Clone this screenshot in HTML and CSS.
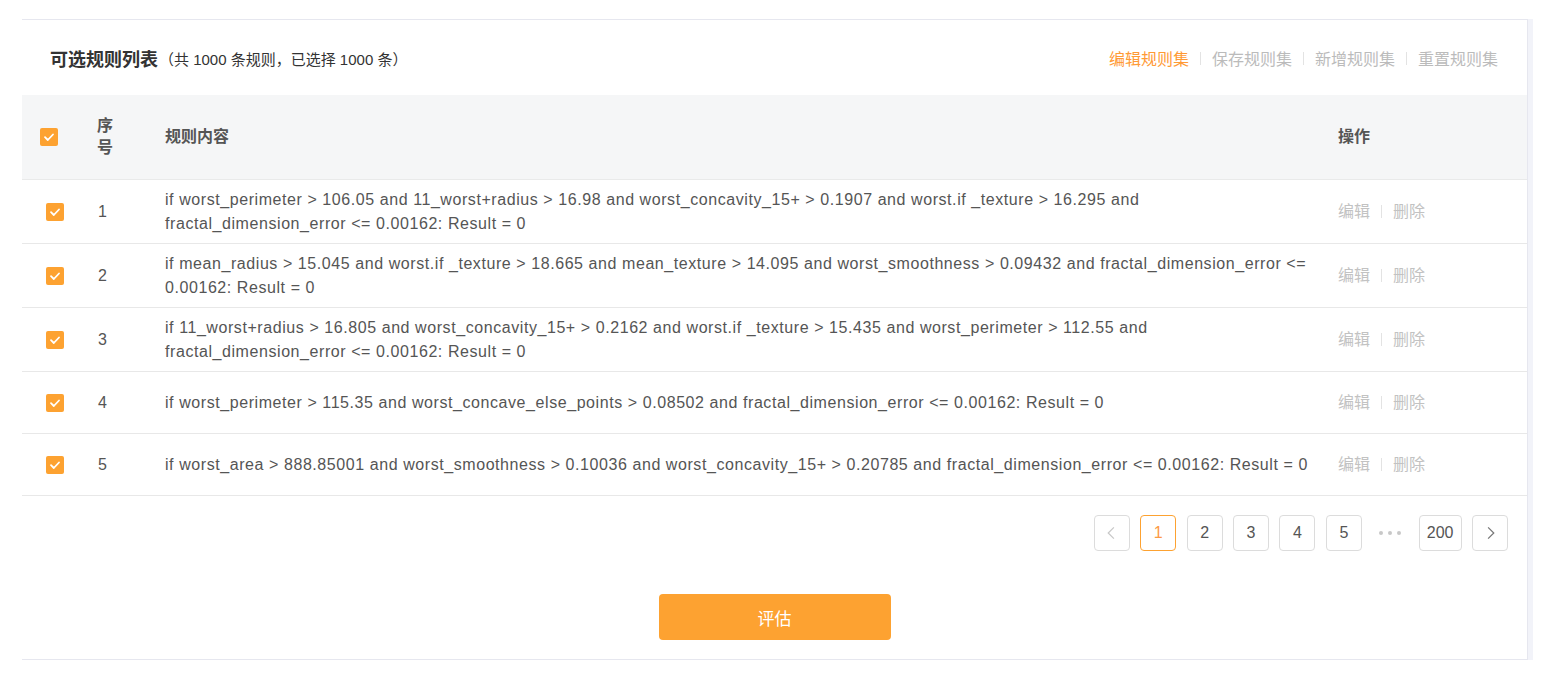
FILE: index.html
```html
<!DOCTYPE html>
<html lang="zh">
<head>
<meta charset="utf-8">
<title>可选规则列表</title>
<link rel="stylesheet" href="styles.css">
</head>
<body>
<div class="card">
  <div class="title-bar">
    <div class="title"><span class="title-main">可选规则列表</span><span class="title-sub">（共 1000 条规则，已选择 1000 条）</span></div>
    <div class="actions">
      <span class="act active">编辑规则集</span><span class="sep"></span>
      <span class="act">保存规则集</span><span class="sep"></span>
      <span class="act">新增规则集</span><span class="sep"></span>
      <span class="act">重置规则集</span>
    </div>
  </div>

  <div class="table">
    <div class="row head">
      <div class="c-check"><span class="cb"><svg viewBox="0 0 18 18"><polyline points="5,9.2 7.8,12 13,6.5"/></svg></span></div>
      <div class="c-num"><span class="num-label">序号</span></div>
      <div class="c-content">规则内容</div>
      <div class="c-op">操作</div>
    </div>
    <div class="row">
      <div class="c-check"><span class="cb"><svg viewBox="0 0 18 18"><polyline points="5,9.2 7.8,12 13,6.5"/></svg></span></div>
      <div class="c-num">1</div>
      <div class="c-content">if worst_perimeter &gt; 106.05 and 11_worst+radius &gt; 16.98 and worst_concavity_15+ &gt; 0.1907 and worst.if _texture &gt; 16.295 and fractal_dimension_error &lt;= 0.00162: Result = 0</div>
      <div class="c-op"><span>编辑</span><span class="sep small"></span><span>删除</span></div>
    </div>
    <div class="row">
      <div class="c-check"><span class="cb"><svg viewBox="0 0 18 18"><polyline points="5,9.2 7.8,12 13,6.5"/></svg></span></div>
      <div class="c-num">2</div>
      <div class="c-content">if mean_radius &gt; 15.045 and worst.if _texture &gt; 18.665 and mean_texture &gt; 14.095 and worst_smoothness &gt; 0.09432 and fractal_dimension_error &lt;= 0.00162: Result = 0</div>
      <div class="c-op"><span>编辑</span><span class="sep small"></span><span>删除</span></div>
    </div>
    <div class="row">
      <div class="c-check"><span class="cb"><svg viewBox="0 0 18 18"><polyline points="5,9.2 7.8,12 13,6.5"/></svg></span></div>
      <div class="c-num">3</div>
      <div class="c-content">if 11_worst+radius &gt; 16.805 and worst_concavity_15+ &gt; 0.2162 and worst.if _texture &gt; 15.435 and worst_perimeter &gt; 112.55 and fractal_dimension_error &lt;= 0.00162: Result = 0</div>
      <div class="c-op"><span>编辑</span><span class="sep small"></span><span>删除</span></div>
    </div>
    <div class="row short">
      <div class="c-check"><span class="cb"><svg viewBox="0 0 18 18"><polyline points="5,9.2 7.8,12 13,6.5"/></svg></span></div>
      <div class="c-num">4</div>
      <div class="c-content">if worst_perimeter &gt; 115.35 and worst_concave_else_points &gt; 0.08502 and fractal_dimension_error &lt;= 0.00162: Result = 0</div>
      <div class="c-op"><span>编辑</span><span class="sep small"></span><span>删除</span></div>
    </div>
    <div class="row short">
      <div class="c-check"><span class="cb"><svg viewBox="0 0 18 18"><polyline points="5,9.2 7.8,12 13,6.5"/></svg></span></div>
      <div class="c-num">5</div>
      <div class="c-content">if worst_area &gt; 888.85001 and worst_smoothness &gt; 0.10036 and worst_concavity_15+ &gt; 0.20785 and fractal_dimension_error &lt;= 0.00162: Result = 0</div>
      <div class="c-op"><span>编辑</span><span class="sep small"></span><span>删除</span></div>
    </div>
  </div>

  <div class="pager">
    <span class="pg arrow disabled"><svg viewBox="0 0 36 36"><polyline points="20,12 14,18 20,24"/></svg></span>
    <span class="pg current">1</span>
    <span class="pg">2</span>
    <span class="pg">3</span>
    <span class="pg">4</span>
    <span class="pg">5</span>
    <span class="dots"><i></i><i></i><i></i></span>
    <span class="pg wide">200</span>
    <span class="pg arrow"><svg viewBox="0 0 36 36"><polyline points="16,12 22,18 16,24"/></svg></span>
  </div>

  <div class="btn-row">
    <button class="btn">评估</button>
  </div>
</div>
</body>
</html>
```

FILE: styles.css
```css
* { box-sizing: border-box; }
html, body { margin: 0; padding: 0; background: #fff; }
body {
  font-family: "Liberation Sans", "Noto Sans CJK SC", sans-serif;
  color: #555;
}
.card {
  margin: 19px 0 0 22px;
  width: 1506px;
  height: 641px;
  background: #fff;
  border-top: 1px solid #e6e7ef;
  border-right: 1px solid #e6e7ef;
  border-bottom: 1px solid #e6e7ef;
  box-shadow: 5px 0 0 #f2f3f9, 0 6px 0 #f2f3f9, 5px 6px 0 #f2f3f9;
  display: flex;
  flex-direction: column;
}
.title-bar {
  height: 75px;
  display: flex;
  align-items: center;
  justify-content: space-between;
  padding: 1px 29px 0 28px;
}
.title { display: flex; align-items: center; }
.title-main { font-size: 18px; font-weight: bold; color: #333; }
.title-sub { font-size: 15px; color: #333; margin-left: 1px; }
.actions { display: flex; align-items: center; font-size: 16px; color: #bbb; }
.act.active { color: #ff9a35; }
.sep { display: inline-block; width: 1px; height: 13px; background: #e3e3e3; margin: 0 11px; }
.sep.small { height: 13px; margin: 0 11px; }

.table { display: flex; flex-direction: column; }
.row {
  display: grid;
  grid-template-columns: 59px 68px 1173px 206px;
  align-items: center;
  min-height: 64px;
  border-bottom: 1px solid #e8e8e8;
  font-size: 16px;
  line-height: 24px;
}
.row.short { min-height: 62px; }
.row.head {
  background: #f5f6f7;
  height: 85px;
  font-weight: bold;
  color: #555;
  font-size: 16px;
  border-bottom: 1px solid #e9eaea;
}
.c-check { padding-left: 24px; display: flex; align-items: center; }
.head .c-check { padding-left: 18px; }
.c-num { padding-left: 17px; }
.head .c-num { padding-left: 16px; }
.num-label { display: block; width: 18px; line-height: 22px; }
.c-content { padding: 0 10px 0 16px; letter-spacing: 0.57px; }
.head .c-content { letter-spacing: 0; }
.c-op { padding-left: 16px; color: #c2c2c2; display: flex; align-items: center; }
.head .c-op { color: #555; }

.cb {
  width: 18px; height: 18px;
  border-radius: 2px;
  background: #fda231;
  display: inline-flex;
}
.cb svg { width: 18px; height: 18px; }
.cb polyline { fill: none; stroke: #fff; stroke-width: 1.8; stroke-linecap: round; stroke-linejoin: round; }

.pager {
  display: flex;
  justify-content: flex-end;
  align-items: center;
  gap: 10.4px;
  padding: 19px 19px 0 0;
}
.pg {
  width: 36px; height: 36px;
  border: 1px solid #dcdcdc;
  border-radius: 4px;
  display: inline-flex;
  align-items: center;
  justify-content: center;
  font-size: 16px;
  color: #555;
}
.pg.wide { width: 43px; }
.pg.current { border-color: #fda231; color: #fd9a45; }
.pg svg { width: 36px; height: 36px; }
.pg polyline { fill: none; stroke: #777; stroke-width: 1.3; }
.pg.disabled polyline { stroke: #c8c8c8; }
.dots { width: 36px; display: inline-flex; justify-content: center; gap: 5px; }
.dots i { width: 4px; height: 4px; border-radius: 50%; background: #c8c8c8; display: block; }

.btn-row { display: flex; justify-content: center; padding-top: 43px; }
.btn {
  width: 232px; height: 46px;
  background: #fda231;
  border: none;
  border-radius: 4px;
  color: #fff;
  font-size: 17px;
  font-family: "Liberation Sans", "Noto Sans CJK SC", sans-serif;
  padding: 0;
}
```
